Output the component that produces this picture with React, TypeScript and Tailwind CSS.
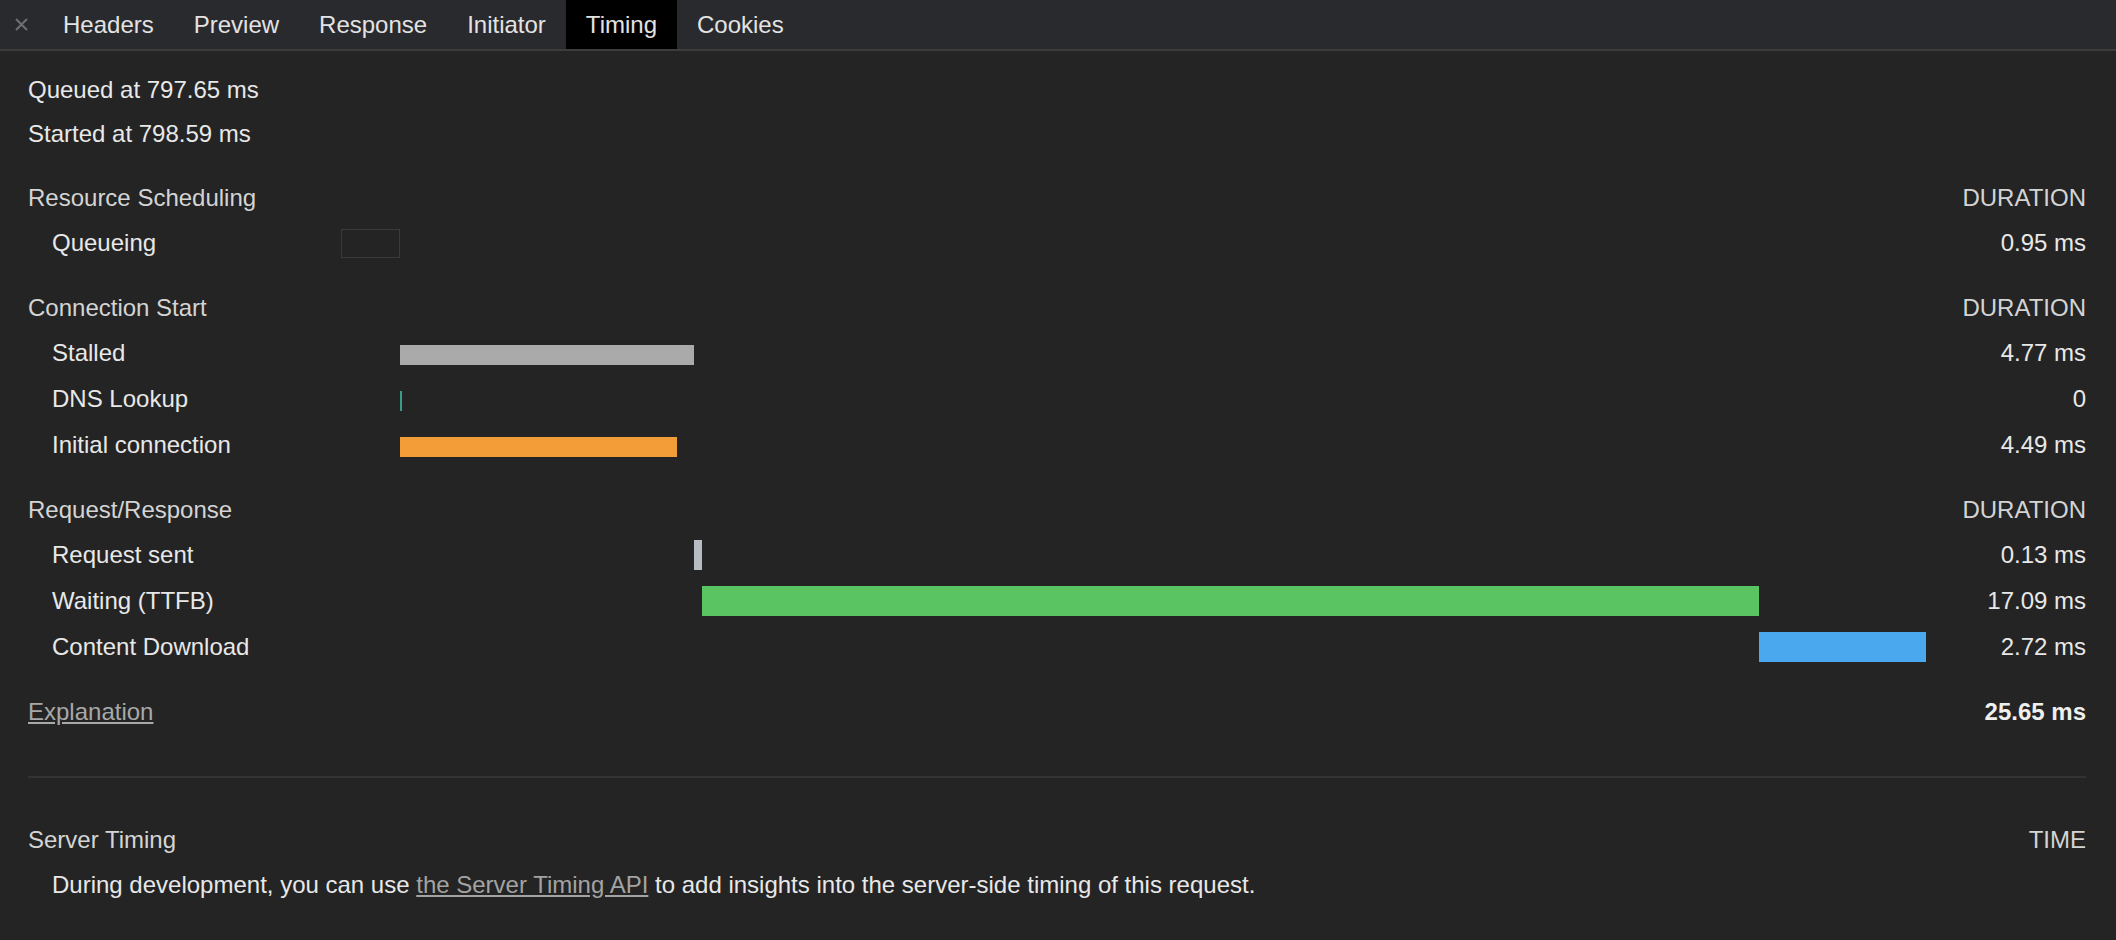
const TOTAL = 25.65

type Phase = {
  label: string
  start: number
  duration: number
  value: string
  kind: 'outline' | 'thin' | 'thick'
  color?: string
}

type Group = { title: string; phases: Phase[] }

const groups: Group[] = [
  {
    title: 'Resource Scheduling',
    phases: [{ label: 'Queueing', start: 0, duration: 0.95, value: '0.95 ms', kind: 'outline' }],
  },
  {
    title: 'Connection Start',
    phases: [
      { label: 'Stalled', start: 0.95, duration: 4.77, value: '4.77 ms', kind: 'thin', color: 'bg-[#aaaaaa]' },
      { label: 'DNS Lookup', start: 0.95, duration: 0, value: '0', kind: 'thin', color: 'bg-[#3b9c8b]' },
      { label: 'Initial connection', start: 0.95, duration: 4.49, value: '4.49 ms', kind: 'thin', color: 'bg-[#f29d38]' },
    ],
  },
  {
    title: 'Request/Response',
    phases: [
      { label: 'Request sent', start: 5.72, duration: 0.13, value: '0.13 ms', kind: 'thick', color: 'bg-[#b6bcc3]' },
      { label: 'Waiting (TTFB)', start: 5.85, duration: 17.09, value: '17.09 ms', kind: 'thick', color: 'bg-[#5ac463]' },
      { label: 'Content Download', start: 22.94, duration: 2.71, value: '2.72 ms', kind: 'thick', color: 'bg-[#4aa8ef]' },
    ],
  },
]

const tabs = ['Headers', 'Preview', 'Response', 'Initiator', 'Timing', 'Cookies']

function Bar({ phase }: { phase: Phase }) {
  const style = {
    marginLeft: `${(phase.start / TOTAL) * 100}%`,
    width: `${(phase.duration / TOTAL) * 100}%`,
    minWidth: '2px',
  }
  if (phase.kind === 'outline') {
    return <div className="h-[29px] border border-[#3a3a3a]" style={style} />
  }
  if (phase.kind === 'thin') {
    return <div className={`mt-[4px] h-[20px] ${phase.color}`} style={style} />
  }
  return <div className={`h-[30px] ${phase.color}`} style={style} />
}

function HeaderRow({ title, right }: { title: string; right: string }) {
  return (
    <div className="grid h-[44px] grid-cols-[313px_1fr_160px] items-center text-[#d4d4d4]">
      <span>{title}</span>
      <span />
      <span className="text-right">{right}</span>
    </div>
  )
}

export default function App() {
  return (
    <div
      className="min-h-[940px] bg-[#242424] text-[24px] text-[#e8e8e8]"
      style={{ fontFamily: '"Liberation Sans", Arial, sans-serif' }}
    >
      {/* Tab strip */}
      <div className="flex h-[51px] items-stretch border-b-2 border-[#3c3c3c] bg-[#292a2d]">
        <div className="flex w-[43px] items-center justify-center">
          <svg width="15" height="15" viewBox="0 0 15 15" className="text-[#6f6f6f]">
            <path d="M2 2 L13 13 M13 2 L2 13" stroke="currentColor" strokeWidth="2" />
          </svg>
        </div>
        {tabs.map((tab) => (
          <div
            key={tab}
            className={`flex items-center px-5 text-[#e3e3e3] ${tab === 'Timing' ? 'bg-black' : ''}`}
          >
            {tab}
          </div>
        ))}
      </div>

      <div className="pl-[28px] pr-[30px] pt-[17px]">
        <div className="flex h-[44px] items-center">Queued at 797.65 ms</div>
        <div className="flex h-[44px] items-center">Started at 798.59 ms</div>

        {groups.map((group) => (
          <div key={group.title} className="mt-[20px]">
            <HeaderRow title={group.title} right="DURATION" />
            {group.phases.map((phase) => (
              <div key={phase.label} className="grid h-[46px] grid-cols-[313px_1fr_160px] items-center">
                <span className="pl-[24px]">{phase.label}</span>
                <div>
                  <Bar phase={phase} />
                </div>
                <span className="text-right">{phase.value}</span>
              </div>
            ))}
          </div>
        ))}

        <div className="mt-[20px] flex h-[44px] items-center justify-between">
          <span className="cursor-pointer text-[#a8a8a8] underline underline-offset-2">Explanation</span>
          <span className="font-bold text-[#efefef]">25.65 ms</span>
        </div>

        <div className="mt-[42px] h-[2px] bg-[#333333]" />

        <div className="mt-[40px]">
          <HeaderRow title="Server Timing" right="TIME" />
          <div className="flex h-[46px] items-center pl-[24px]">
            <span>
              During development, you can use{' '}
              <span className="cursor-pointer text-[#a3a3a3] underline underline-offset-2">the Server Timing API</span>{' '}
              to add insights into the server-side timing of this request.
            </span>
          </div>
        </div>
      </div>
    </div>
  )
}
